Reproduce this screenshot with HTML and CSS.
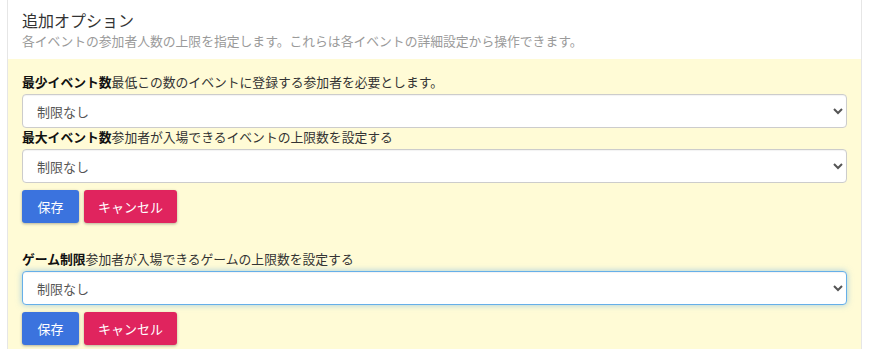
FILE: index.html
```html
<!DOCTYPE html>
<html lang="ja">
<head>
  <meta charset="UTF-8" />
  <meta name="viewport" content="width=device-width, initial-scale=1.0"/>
  <title>追加オプション</title>
  <link rel="stylesheet" href="styles.css">
</head>
<body>

  <div class="panel">
    <div class="panel-head">
      <h2>追加オプション</h2>
      <p class="sub">各イベントの参加者人数の上限を指定します。これらは各イベントの詳細設定から操作できます。</p>
    </div>

    <div class="panel-body">
      <div class="group">
        <label class="field-label"><b>最少イベント数</b>最低この数のイベントに登録する参加者を必要とします。</label>
        <select class="form-control">
          <option>制限なし</option>
        </select>
        <label class="field-label"><b>最大イベント数</b>参加者が入場できるイベントの上限数を設定する</label>
        <select class="form-control">
          <option>制限なし</option>
        </select>
        <div class="actions">
          <button class="btn btn-save">保存</button>
          <button class="btn btn-cancel">キャンセル</button>
        </div>
      </div>

      <div class="group">
        <label class="field-label"><b>ゲーム制限</b>参加者が入場できるゲームの上限数を設定する</label>
        <select class="form-control is-focus">
          <option>制限なし</option>
        </select>
        <div class="actions">
          <button class="btn btn-save">保存</button>
          <button class="btn btn-cancel">キャンセル</button>
        </div>
      </div>
    </div>
  </div>

</body>
</html>
```

FILE: styles.css
```css
:root {
  --note-bg: #fffbd6;
  --text: #333;
  --muted: #9a9a9a;
  --blue: #3b73de;
  --pink: #e0245e;
  --focus: #66afe9;
}

body {
  margin: 0;
  background: #fff;
  color: var(--text);
  font-family: "Noto Sans CJK JP", "Noto Sans", sans-serif;
}

.panel {
  margin-left: 7px;
  width: 853px;
  border-left: 1px solid #e6e6e6;
  border-right: 1px solid #e6e6e6;
  background: #fff;
}

.panel-head {
  padding: 8px 14px 9px;
}

.panel-head h2 {
  margin: 0;
  font-size: 16px;
  font-weight: normal;
  line-height: 24px;
  color: #333;
}

.sub {
  margin: 0;
  font-size: 12.8px;
  line-height: 18px;
  color: var(--muted);
}

.panel-body {
  background: var(--note-bg);
  padding: 14px 14px 4px;
}

.group {
  display: flex;
  flex-direction: column;
  align-items: flex-start;
}

.group + .group {
  margin-top: 27px;
}

.field-label {
  display: block;
  font-size: 12.8px;
  line-height: 18px;
  margin-bottom: 3px;
  color: #333;
}

.field-label b {
  color: #111;
}

.form-control {
  width: 100%;
  height: 34px;
  box-sizing: border-box;
  padding: 0 10px;
  font-family: inherit;
  font-size: 13px;
  color: #555;
  background: #fff;
  border: 1px solid #ccc;
  border-radius: 4px;
  box-shadow: inset 0 1px 1px rgba(0, 0, 0, 0.05);
}

.form-control.is-focus {
  border-color: var(--focus);
  outline: none;
  box-shadow: inset 0 1px 1px rgba(0, 0, 0, 0.05), 0 0 6px rgba(102, 175, 233, 0.6);
}

.actions {
  display: flex;
  gap: 5px;
  margin-top: 7px;
}

.btn {
  height: 33px;
  padding: 0 15px;
  border: none;
  border-radius: 3px;
  font-family: inherit;
  font-size: 13px;
  color: #fff;
  cursor: pointer;
  box-shadow: 0 1px 3px rgba(0, 0, 0, 0.3);
}

.btn-save {
  min-width: 57px;
}

.btn-save {
  background: var(--blue);
}

.btn-cancel {
  padding: 0 14px;
  background: var(--pink);
}
```
